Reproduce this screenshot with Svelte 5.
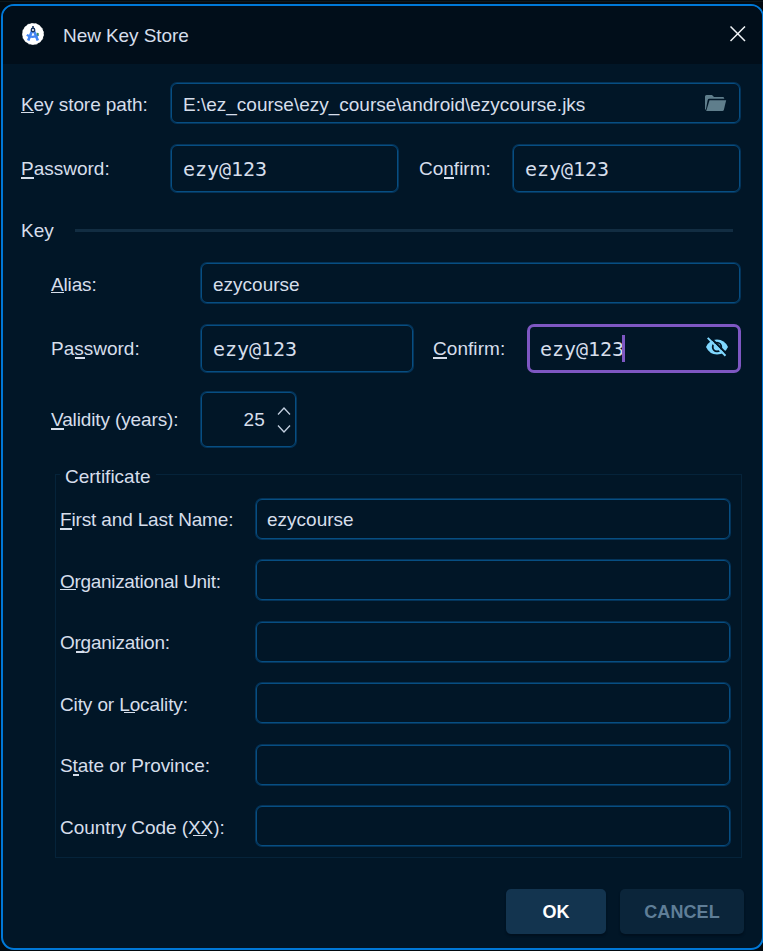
<script>
  const certificate = [
    { text: 'First and Last Name:', u: [0, 12, 2], ls: -0.15, value: 'ezycourse' },
    { text: 'Organizational Unit:', u: [0, 16, 1], ls: -0.31, value: '' },
    { text: 'Organization:', u: [16, 8, 2], ls: -0.25, value: '' },
    { text: 'City or Locality:', u: [64, 11, 1], ls: -0.12, value: '' },
    { text: 'State or Province:', u: [13, 6, 2], ls: -0.06, value: '' },
    { text: 'Country Code (XX):', u: [133, 14, 1], ls: -0.06, value: '' }
  ];
</script>

{#snippet label(text, [left, width, thick], ls = 0)}
  <span class="label" style="letter-spacing:{ls}px">{text}<i style="left:{left}px;width:{width}px;height:{thick}px"></i></span>
{/snippet}

<div class="screen">
  <div class="dialog">
    <header>
      <svg class="logo" width="22" height="22" viewBox="0 0 22 22">
        <circle cx="11" cy="11" r="10.700" fill="#fff" stroke="#fff" stroke-width=".6" stroke-dasharray="2 2" />
        <path d="M10.200 7.500L6.200 17.600M11.800 7.500L15.800 17.600" stroke="#4285f4" stroke-width="2.600" fill="none" />
        <path d="M4.800 11.800c3.500 2.500 8 2.500 11.500 0" stroke="#4285f4" stroke-width="2.200" fill="none" />
        <path d="M14.400 9.800l2.200.2.200 2.400-1.400.4z" fill="#34875e" />
        <path d="M11 3v3" stroke="#263f68" stroke-width="1.700" />
        <circle cx="11" cy="7" r="1.700" fill="#fff" stroke="#17345f" stroke-width="1.400" />
      </svg>
      <h1>New Key Store</h1>
      <svg class="close" width="16" height="16" viewBox="0 0 16 16">
        <path d="M.5.5L15 15M15 .5L.5 15" stroke="#f1f4f7" stroke-width="1.500" fill="none" />
      </svg>
    </header>

    <main>
      <div class="row path low">
        {@render label('Key store path:', [0, 13, 1], -0.07)}
        <div class="field">
          <span class="path-text">E:\ez_course\ezy_course\android\ezycourse.jks</span>
          <svg class="folder" width="22" height="16" viewBox="0 0 22 16">
            <path d="M0 14.500V1.500Q0 0 1.500 0H7l2 2h9q1.300 0 1.300 1.700H4.200Q3 3.700 2.700 5L.9 14.500z" fill="#5f7e8c" />
            <path d="M4.500 5.200H21.200L18.800 15q-.3 1-1.300 1H1.200z" fill="#5f7e8c" />
          </svg>
        </div>
      </div>

      <div class="row store">
        {@render label('Password:', [0, 13, 2])}
        <div class="field mono">ezy@123</div>
        {@render label('Confirm:', [25, 10, 2])}
        <div class="field mono">ezy@123</div>
      </div>

      <div class="heading"><span>Key</span><hr /></div>

      <section>
        <div class="row alias low">
          {@render label('Alias:', [0, 13, 1], -0.15)}
          <div class="field">ezycourse</div>
        </div>
        <div class="row keypass">
          {@render label('Password:', [24, 10, 2])}
          <div class="field mono">ezy@123</div>
          {@render label('Confirm:', [0, 14, 2], 0.06)}
          <div class="field mono focus">
            <span class="typed">ezy@123</span><b class="caret"></b>
            <svg class="eye" width="22" height="20" viewBox="0 0 22 20">
              <path d="M0 10Q3.500 2.500 11 2.500T22 10Q18.500 17.500 11 17.500T0 10z" fill="#80d8ff" />
              <circle cx="11" cy="10" r="4.300" fill="none" stroke="#011627" stroke-width="1.800" />
              <path d="M3-.8L21.500 17.700" stroke="#011627" stroke-width="2.200" />
              <path d="M1.700.9L19.500 18.700" stroke="#80d8ff" stroke-width="2" />
            </svg>
          </div>
        </div>
        <div class="row validity">
          {@render label('Validity (years):', [0, 13, 2], -0.12)}
          <div class="field spinner">
            <span>25</span>
            <svg width="14" height="28" viewBox="0 0 14 28">
              <path d="M1 8.500L7 2l6 6.500M1 19.500L7 26l6-6.500" stroke="#c3cfdf" stroke-width="1.300" fill="none" />
            </svg>
          </div>
        </div>

        <fieldset>
          <legend>Certificate</legend>
          {#each certificate as item}
            <div class="row cert low">
              {@render label(item.text, item.u, item.ls)}
              <div class="field">{item.value}</div>
            </div>
          {/each}
        </fieldset>
      </section>

      <footer>
        <button class="ok">OK</button>
        <button class="cancel">CANCEL</button>
      </footer>
    </main>
  </div>
</div>

<style>
  :global(body) { background: #020a10; overflow: hidden; }
  * { box-sizing: border-box; }
  .screen {
    width: 763px; height: 951px; padding: 4px 0 0 1px; overflow: hidden;
    font: 19px/22px "Liberation Sans", Arial, sans-serif; color: #d6deeb;
    background: linear-gradient(#020a10 1px, #0c171c 1px, #0c171c 2px, #020a10 2px);
  }
  .dialog {
    width: 763px; height: 946px; border: 2px solid #0078d7; border-radius: 13px;
    background: #011627; overflow: hidden; display: flex; flex-direction: column;
  }
  header {
    height: 58px; background: #010e1a; display: flex; align-items: center;
    padding: 0 16px 0 19px; flex: none;
  }
  .logo { margin-top: -2px; }
  h1 {
    margin: 0 0 0 19px; padding-top: 2px; font-size: 19px; font-weight: 400;
    line-height: 22px; letter-spacing: -0.08px; flex: 1;
  }
  .close { margin-top: -2px; }
  main { padding: 18px 23px 0 18px; flex: 1; display: flex; flex-direction: column; }
  .row { display: grid; align-items: center; flex: none; }
  .label { position: relative; white-space: nowrap; height: 22px; }
  .label i { position: absolute; top: 19px; background: #d6deeb; }
  .low .label { margin-top: 4px; }
  .low .field { padding-top: 4px; }
  .low .label i { top: 18px; }
  .field {
    height: calc(100% - 2px); margin: 1px; padding: 0 11px;
    border: 1px solid #074e82; border-radius: 6px;
    box-shadow: 0 0 0 1px #04345a; display: flex; align-items: center; white-space: nowrap;
  }
  .mono { font: 20px/24px "DejaVu Sans Mono", monospace; letter-spacing: -0.04px; }
  .path { height: 42px; grid-template-columns: 149px 571px; }
  .path-text { flex: 1; }
  .folder { margin: -4px 1px 0 0; }
  .store { height: 49px; margin-top: 20px; grid-template-columns: 149px 229px 20px 93px 229px; }
  .store > :nth-child(3) { grid-column: 4; }
  .heading { display: flex; align-items: center; height: 22px; margin-top: 26px; }
  .heading span { padding-top: 2px; }
  hr { flex: 1; height: 3px; border: 0; background: #122d42; margin: 0 6px 0 21px; }
  section { padding-left: 30px; display: flex; flex-direction: column; }
  .alias { height: 42px; margin-top: 21px; grid-template-columns: 149px 541px; }
  .keypass { height: 49px; margin-top: 20px; grid-template-columns: 149px 214px 19px 94px 214px; }
  .keypass > :nth-child(3) { grid-column: 4; }
  .focus { margin: 0; height: 49px; padding: 0 10px; border: 3px solid #7e57c2; box-shadow: none; border-radius: 7px; }
  .caret { width: 3px; height: 27px; background: #7e57c2; margin-left: -2px; }
  .eye { margin: -3px 0 0 auto; }
  .validity { height: 57px; margin-top: 18px; grid-template-columns: 149px 97px; }
  .validity .label { margin-top: 1px; }
  .spinner { justify-content: flex-end; gap: 12px; padding-right: 4px; }
  .spinner span { letter-spacing: 0.2px; padding-top: 1px; }
  fieldset {
    position: relative; margin: 26px 0 0 4px; padding: 22.75px 0 0 4px; width: 687px; height: 384px;
    border: 1px solid #05233a; min-width: 0;
  }
  legend { position: absolute; left: 4px; top: -9px; padding: 0 5px; background: #011627; line-height: 22px; }
  .cert { height: 42px; grid-template-columns: 195px 476px; margin-bottom: 19.5px; }
  .cert .label { margin-top: 2.5px; }
  .cert .label i { top: 18.5px; }
  .cert .field { padding-left: 10px; padding-top: 2px; }
  footer { display: flex; gap: 14px; justify-content: flex-end; margin: 31px -5px 0 0; }
  button {
    height: 45px; border: 0; border-radius: 5px; padding: 0;
    font: bold 18px/22px "Liberation Sans", Arial, sans-serif; box-shadow: 0 2px 2px #00101e;
    letter-spacing: 0.1px;
  }
  .ok { width: 100px; background: #13344f; color: #fff; }
  .cancel { width: 124px; background: #0b253a; color: #5f7e97; }
</style>
